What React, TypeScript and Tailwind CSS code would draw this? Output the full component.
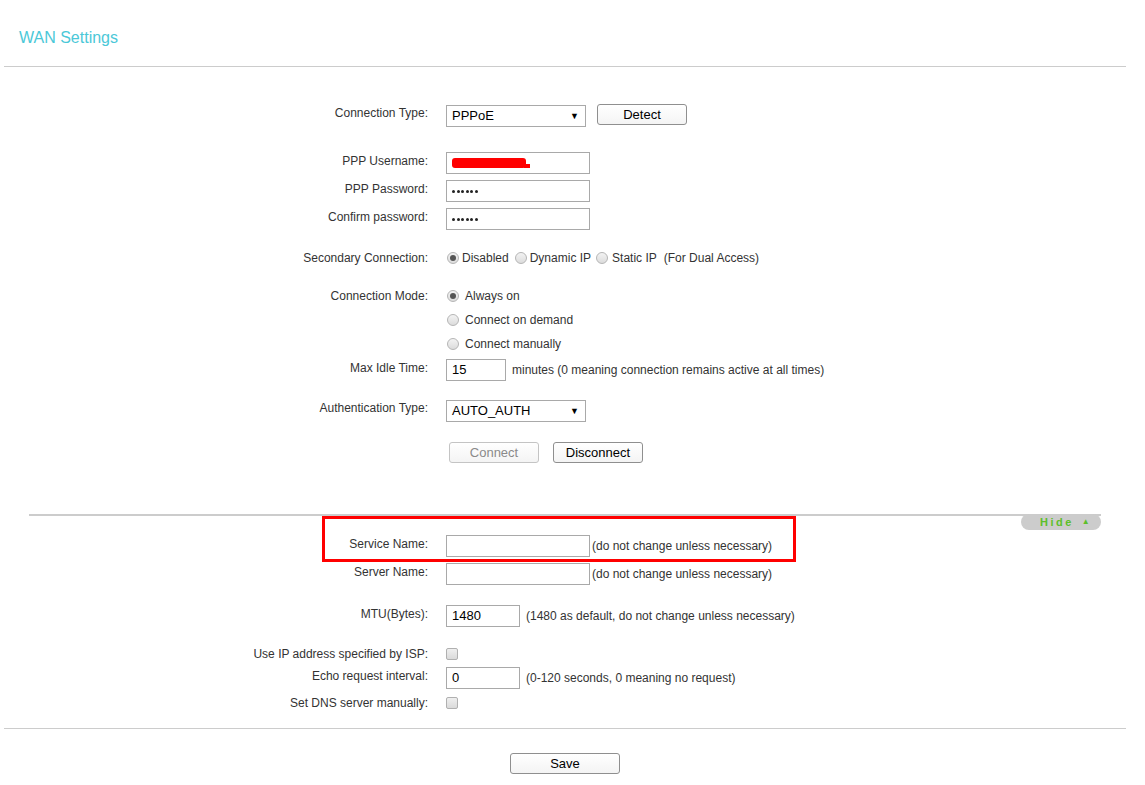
import React from "react";

const Label = ({ children, pt = true }: { children?: React.ReactNode; pt?: boolean }) => (
  <div className={`w-[428px] shrink-0 text-right ${pt ? "pt-[2px] leading-[14px]" : "leading-[16px]"}`}>{children}</div>
);

const Input = ({ w, children }: { w: string; children?: React.ReactNode }) => (
  <div className={`${w} h-[22px] border border-[#a9a9a9] bg-white flex items-center pl-[5px] text-[13px] text-black shrink-0`}>
    {children}
  </div>
);

const Select = ({ value }: { value: string }) => (
  <div className="w-[140px] h-[22px] border border-[#a9a9a9] bg-white flex items-center justify-between pl-[5px] pr-[6px] text-[13px] text-black shrink-0">
    <span>{value}</span>
    <span className="text-[9px] leading-none">▼</span>
  </div>
);

const Btn = ({ children, w = "w-[90px]", disabled = false }: { children: React.ReactNode; w?: string; disabled?: boolean }) => (
  <div
    className={`${w} h-[21px] rounded-[3px] border ${disabled ? "border-[#c4c4c4] text-[#8a8a8a]" : "border-[#8f8f8f] text-black"} bg-gradient-to-b from-white to-[#f4f4f4] flex items-center justify-center text-[13px] shrink-0`}
  >
    {children}
  </div>
);

const Radio = ({ checked = false }: { checked?: boolean }) => (
  <div className="w-[12px] h-[12px] rounded-full border border-[#b5b5b5] bg-gradient-to-b from-[#f3f3f3] to-[#dcdcdc] flex items-center justify-center shrink-0">
    {checked && <div className="w-[6px] h-[6px] rounded-full bg-[#555]" />}
  </div>
);

const Check = () => (
  <div className="w-[12px] h-[12px] rounded-[2px] border border-[#b0b0b0] bg-gradient-to-b from-[#efefef] to-[#dadada] shrink-0" />
);

const Dots = () => (
  <div className="flex gap-[1.6px]">
    {[0, 1, 2, 3, 4, 5].map((i) => (
      <div key={i} className="w-[3px] h-[3px] rounded-full bg-[#222]" />
    ))}
  </div>
);

export default function App() {
  return (
    <div className="relative w-[1145px] h-[785px] bg-white text-[12px] text-[#333] font-['Liberation_Sans',Arial,sans-serif] overflow-hidden">
      <div className="h-[66px] pl-[19px] pt-[28px] text-[16px] leading-[20px] text-[#4bc8d8]">WAN Settings</div>
      <div className="ml-[4px] w-[1122px] h-px bg-[#cccccc]" />

      {/* Connection type */}
      <div className="flex mt-[38px]">
        <div className="w-[428px] shrink-0 text-right pt-[1px] leading-[14px]">Connection Type:</div>
        <div className="ml-[18px] flex items-start">
          <Select value="PPPoE" />
          <div className="ml-[11px] -mt-[1px]">
            <Btn>Detect</Btn>
          </div>
        </div>
      </div>

      <div className="flex mt-[25px]">
        <Label>PPP Username:</Label>
        <div className="ml-[18px]">
          <Input w="w-[144px]">
            <div className="relative w-[78px] h-[10px]">
              <div className="absolute left-0 top-0 w-[74px] h-[10px] rounded-[3px] bg-[#ff0000]" />
              <div className="absolute right-0 bottom-0 w-[6px] h-[4px] bg-[#ff0000]" />
            </div>
          </Input>
        </div>
      </div>
      <div className="flex mt-[6px]">
        <Label>PPP Password:</Label>
        <div className="ml-[18px]">
          <Input w="w-[144px]">
            <Dots />
          </Input>
        </div>
      </div>
      <div className="flex mt-[6px]">
        <Label>Confirm password:</Label>
        <div className="ml-[18px]">
          <Input w="w-[144px]">
            <Dots />
          </Input>
        </div>
      </div>

      {/* Secondary connection */}
      <div className="flex mt-[20px] h-[16px] items-center">
        <Label pt={false}>Secondary Connection:</Label>
        <div className="ml-[19px] flex items-center">
          <Radio checked />
          <span className="ml-[3px]">Disabled</span>
          <div className="ml-[6px]"><Radio /></div>
          <span className="ml-[3px]">Dynamic IP</span>
          <div className="ml-[5px]"><Radio /></div>
          <span className="ml-[4px]">Static IP</span>
          <span className="ml-[7px]">(For Dual Access)</span>
        </div>
      </div>

      {/* Connection mode */}
      <div className="mt-[18px]">
        <div className="flex h-[24px] items-center">
          <Label pt={false}>Connection Mode:</Label>
          <div className="ml-[19px] flex items-center">
            <Radio checked />
            <span className="ml-[6px]">Always on</span>
          </div>
        </div>
        <div className="flex h-[24px] items-center">
          <Label pt={false} />
          <div className="ml-[19px] flex items-center">
            <Radio />
            <span className="ml-[6px]">Connect on demand</span>
          </div>
        </div>
        <div className="flex h-[24px] items-center">
          <Label pt={false} />
          <div className="ml-[19px] flex items-center">
            <Radio />
            <span className="ml-[6px]">Connect manually</span>
          </div>
        </div>
      </div>

      <div className="flex mt-[3px]">
        <Label>Max Idle Time:</Label>
        <div className="ml-[18px] flex items-center">
          <Input w="w-[60px]">15</Input>
          <span className="ml-[6px]">minutes (0 meaning connection remains active at all times)</span>
        </div>
      </div>

      <div className="flex mt-[19px]">
        <div className="w-[428px] shrink-0 text-right pt-[1px] leading-[14px]">Authentication Type:</div>
        <div className="ml-[18px]">
          <Select value="AUTO_AUTH" />
        </div>
      </div>

      <div className="flex mt-[20px] pl-[449px]">
        <Btn disabled>Connect</Btn>
        <div className="ml-[14px]">
          <Btn>Disconnect</Btn>
        </div>
      </div>

      {/* Advanced section */}
      <div className="relative mt-[51px] ml-[29px] w-[1072px] h-[2px] bg-[#cccccc]">
        <div className="absolute right-0 top-0 w-[80px] h-[16px] rounded-[8px] bg-[#cccccc] flex items-center pl-[19px] text-[11px] font-bold tracking-[2.5px] text-[#5cbf2a]">
          <span>Hide</span>
          <span className="ml-[8px] text-[8px] leading-none">▲</span>
        </div>
      </div>

      <div className="relative">
        <div className="absolute left-[322px] top-0 w-[474px] h-[46px] border-[3px] border-[#ff0000]" />
        <div className="flex pt-[19px]">
          <Label>Service Name:</Label>
          <div className="ml-[18px] flex items-center">
            <Input w="w-[144px]" />
            <span className="ml-[2px]">(do not change unless necessary)</span>
          </div>
        </div>
      </div>
      <div className="flex mt-[6px]">
        <Label>Server Name:</Label>
        <div className="ml-[18px] flex items-center">
          <Input w="w-[144px]" />
          <span className="ml-[2px]">(do not change unless necessary)</span>
        </div>
      </div>

      <div className="flex mt-[20px]">
        <Label>MTU(Bytes):</Label>
        <div className="ml-[18px] flex items-center">
          <Input w="w-[74px]">1480</Input>
          <span className="ml-[6px]">(1480 as default, do not change unless necessary)</span>
        </div>
      </div>

      <div className="flex mt-[20px] h-[14px] items-center">
        <Label pt={false}>Use IP address specified by ISP:</Label>
        <div className="ml-[18px]">
          <Check />
        </div>
      </div>
      <div className="flex mt-[6px]">
        <Label>Echo request interval:</Label>
        <div className="ml-[18px] flex items-center">
          <Input w="w-[74px]">0</Input>
          <span className="ml-[6px]">(0-120 seconds, 0 meaning no request)</span>
        </div>
      </div>
      <div className="flex mt-[7px] h-[14px] items-center">
        <Label pt={false}>Set DNS server manually:</Label>
        <div className="ml-[18px]">
          <Check />
        </div>
      </div>

      <div className="mt-[18px] ml-[4px] w-[1122px] h-px bg-[#cccccc]" />
      <div className="mt-[24px] pl-[510px]">
        <Btn w="w-[110px]">Save</Btn>
      </div>
    </div>
  );
}
